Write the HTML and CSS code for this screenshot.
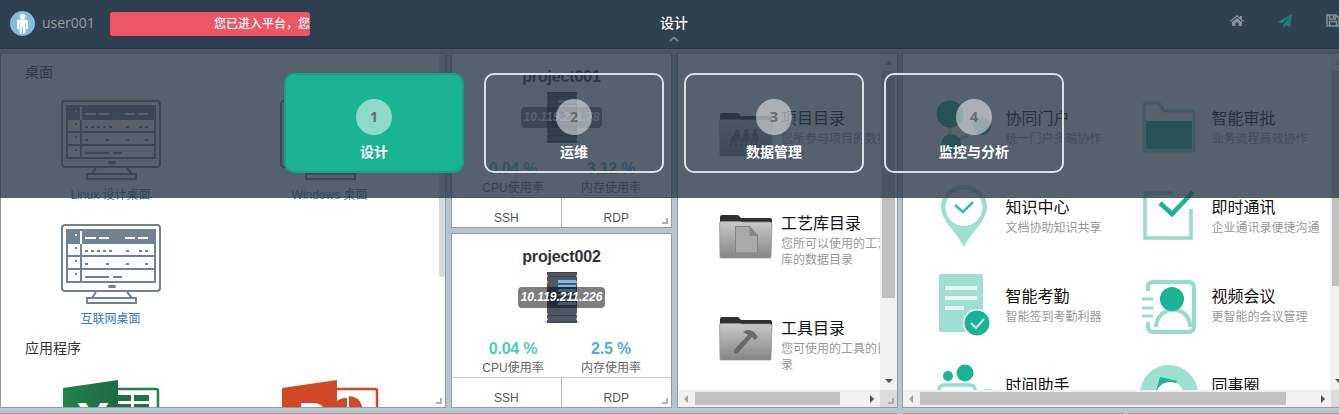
FILE: index.html
```html
<!DOCTYPE html>
<html lang="zh-CN">
<head>
<meta charset="utf-8">
<title>设计</title>
<link rel="stylesheet" href="styles.css">
</head>
<body>
<svg class="defs" width="0" height="0">
  <defs>
    <linearGradient id="metal" x1="0" y1="0" x2="0" y2="1"><stop offset="0" stop-color="#c9c9c9"/><stop offset="1" stop-color="#858585"/></linearGradient>
    <linearGradient id="xl" x1="0" x2="1"><stop offset="0" stop-color="#21814b"/><stop offset="1" stop-color="#1e6b41"/></linearGradient>
    <symbol id="monitor" viewBox="0 0 100 80">
      <rect x="1" y="1" width="98" height="66" rx="3" fill="none" stroke="#708294" stroke-width="2"/>
      <path fill="#708294" fill-rule="evenodd" d="M5 5H95V59H5ZM7 20H19V31H7ZM21 20H93V31H21ZM7 33H19V44H7ZM21 33H93V44H21ZM7 46H19V57H7ZM21 46H93V57H21Z"/>
      <path fill="#fff" d="M19 7h2v13h-2zM14 10h2v2h-2zM24 13h11v2H24zM38 13h10v2H38zM64 13h10v2H64zM77 13h10v2H77z"/>
      <path fill="#708294" d="M14 23h2v2h-2zM14 36h2v2h-2zM14 49h2v2h-2zM24 26h3v2h-3zM30 26h3v2h-3zM36 26h3v2h-3zM42 26h3v2h-3zM48 26h3v2h-3zM65 26h3v2h-3zM78 26h3v2h-3zM84 26h3v2h-3zM24 39h3v2h-3zM45 39h3v2h-3zM65 39h3v2h-3zM84 39h3v2h-3zM24 52h24v2H24zM52 52h9v2h-9z"/>
      <rect x="47" y="61" width="8" height="3" rx="1.5" fill="#708294"/>
      <path d="M35 68l-4 6M66 68l5 6M26 74h49v5H26z" fill="none" stroke="#708294" stroke-width="2"/>
    </symbol>
    <symbol id="server" viewBox="0 0 38 51">
      <path fill="#dcdcdc" d="M1 49h36v2H1z"/>
      <path fill="#4e5664" d="M4 0h30v3l-1 1 1 1v4l-1 1 1 1v30l-1 1 1 1v3l-1 1 1 1v3H4v-3l1-1-1-1v-3l1-1-1-1V11l1-1-1-1V5l1-1-1-1z"/>
      <path fill="#3a414d" d="M4 0h30v1H4zM5 4h28v1H5zM5 43h28v1H5zM4 49h30v1H4z"/>
      <path fill="#78bdea" d="M15 8h18v3H15zM15 13h18v2H15zM15 17h18v3H15zM15 22h18v2H15zM15 26h18v2H15zM15 30h18v3H15z"/>
    </symbol>
    <symbol id="folder" viewBox="0 0 54 45">
      <path fill="#2c302f" d="M1 8V3q0-2 2-2h15q2 0 3 2l1 1h29q2 0 2 2v8H1z"/>
      <path fill="url(#metal)" stroke="#949494" stroke-width=".7" d="M.5 9Q.5 7.500 2 7.500h18q2 0 3 .5h28q2 0 2 2l-1 33q0 1-1 1H2q-1 0-1-1z"/>
    </symbol>
  </defs>
</svg>

<header class="topbar">
  <div class="user">
    <svg width="26" height="26" viewBox="0 0 26 26"><circle cx="12.500" cy="12.500" r="12.500" fill="#84bce0"/><circle cx="12.500" cy="5.500" r="2.700" fill="#fff"/><path fill="#fff" d="M9 8.500h7q2 0 2 2V18h-2v-6h-.6v10.500H13V16h-1v6.500H9.600V12H9v6H7v-7.500q0-2 2-2z"/></svg>
    <span>user001</span>
  </div>
  <div class="notice"><span>您已进入平台，您</span></div>
  <div class="current"><b>设计</b><svg width="10" height="6" viewBox="0 0 10 6"><path d="M1 5l4-3.600L9 5" fill="none" stroke="#78838e" stroke-width="1.800"/></svg></div>
  <nav class="tools">
    <svg width="14" height="12" viewBox="0 0 14 12"><path fill="#87919b" d="M7 0l3 2.600V1h2v3.400l2 1.700-.8.900L7 1.800.8 7 0 6.100zM7 3l5 4.100V11H8.500V7.500h-3V11H2V7.100z"/></svg>
    <svg width="14" height="14" viewBox="0 0 14 14"><path fill="#1b7f7b" d="M14 0l-2 13-4.200-1.700L5.500 14v-3.700L12 2.500 4 9.600 0 8z"/></svg>
    <svg class="save" width="14" height="13" viewBox="0 0 14 13"><path d="M1 1h9l3 3v8H1zM3.500 1v4h6V1M3.500 12V7.500h7V12M7.500 2v2" fill="none" stroke="#87919b" stroke-width="1.500"/></svg>
  </nav>
</header>

<main class="board">
  <section class="panel desktops">
    <div class="scroller">
      <h3>桌面</h3>
      <div class="apps">
        <a class="app"><svg width="100" height="80"><use href="#monitor"/></svg><span>Linux 设计桌面</span></a>
        <a class="app"><svg width="100" height="80"><use href="#monitor"/></svg><span>Windows 桌面</span></a>
        <a class="app"><svg width="100" height="80"><use href="#monitor"/></svg><span>互联网桌面</span></a>
      </div>
      <h3>应用程序</h3>
      <div class="apps office">
        <a class="app"><svg width="97" height="80" viewBox="0 0 97 80"><rect x="50" y="9" width="45" height="70" rx="2" fill="#fff" stroke="#21814b" stroke-width="2.500"/><path fill="#207245" d="M55 15h13v6H55zM71 15h15v6H71zM55 24h13v6H55zM71 24h15v6H71z"/><path fill="url(#xl)" d="M0 8L55 0v80L0 72z"/><text x="14" y="58" class="glyph">X</text></svg></a>
        <a class="app"><svg width="97" height="80" viewBox="0 0 97 80"><rect x="50" y="9" width="45" height="70" rx="2" fill="#fff" stroke="#d24726" stroke-width="2.500"/><circle cx="64" cy="34" r="16" fill="#d24726"/><path fill="#d24726" stroke="#fff" stroke-width="2" d="M66 32V15q15 0 16 17z"/><path fill="#d24726" d="M0 8L55 0v80L0 72z"/><text x="15" y="58" class="glyph">P</text></svg></a>
      </div>
    </div>
    <i class="thin-thumb"></i><i class="grip"></i>
  </section>

  <div class="projects">
    <section class="panel project first">
      <h2>project001</h2>
      <div class="host"><svg width="38" height="51"><use href="#server"/></svg><em>10.119.221.78</em></div>
      <div class="stats"><div><b class="cpu">0.04 %</b><span>CPU使用率</span></div><div><b class="mem">3.12 %</b><span>内存使用率</span></div></div>
      <div class="actions"><span>SSH</span><span>RDP</span></div><i class="grip"></i>
    </section>
    <section class="panel project">
      <h2>project002</h2>
      <div class="host"><svg width="38" height="51"><use href="#server"/></svg><em>10.119.211.226</em></div>
      <div class="stats"><div><b class="cpu">0.04 %</b><span>CPU使用率</span></div><div><b class="mem">2.5 %</b><span>内存使用率</span></div></div>
      <div class="actions"><span>SSH</span><span>RDP</span></div><i class="grip"></i>
    </section>
  </div>

  <section class="panel framed">
    <div class="view folders">
      <div class="folder-icons">
        <svg width="54" height="45" viewBox="0 0 54 45"><use href="#folder"/><g fill="#6e6e6e"><circle cx="18" cy="19" r="2"/><circle cx="27" cy="19" r="2"/><circle cx="36" cy="19" r="2"/><path d="M16 21h4l3 7 2-7h4l3 7 2-7h4l3 9-3-3 1 7h-2l-2-5-2 5h-2l1-7-2 2-1-2-1 7h-2l-1-5-2 5h-2l1-7-2 2-1-2-1 7h-2l-1-5-2 5h-2l1-7-2 2z"/></g></svg>
        <svg width="54" height="45" viewBox="0 0 54 45"><use href="#folder"/><path d="M16.500 12.500H31l7.500 9V39h-22zM31 12.500v9h7.500" fill="#a9a9a9" stroke="#838383"/><path d="M31 12.500l7.500 9H31z" fill="#858585"/></svg>
        <svg width="54" height="45" viewBox="0 0 54 45"><use href="#folder"/><path fill="#6a6a6a" d="M15 34L29 19l-5-3q5-4 11 0l4 5-3 3-3-3-14 16q-5 2-4-3z"/></svg>
      </div>
      <div class="folder-text">
        <div><h4>项目目录</h4><p>您所参与项目的数据<br>目录</p></div>
        <div><h4>工艺库目录</h4><p>您所可以使用的工艺<br>库的数据目录</p></div>
        <div><h4>工具目录</h4><p>您可使用的工具的目<br>录</p></div>
      </div>
    </div>
    <div class="vbar"><i class="up"></i><i class="thumb tall"></i><i class="down"></i></div>
    <div class="hbar"><i class="left"></i><i class="thumb short"></i><i class="right"></i></div>
    <div class="corner"></div><i class="grip"></i>
  </section>

  <section class="panel framed wide">
    <div class="view services">
      <div class="service"><svg width="58" height="64" viewBox="0 -4 58 64"><path d="M14 14v31L47 26" fill="none" stroke="#9edfd0" stroke-width="3"/><circle cx="14" cy="14" r="13.500" fill="#1ab394"/><circle cx="15" cy="44" r="10" fill="#1ab394"/><circle cx="46" cy="26" r="9" fill="#1ab394"/></svg><div><h4>协同门户</h4><p>统一门户多端协作</p></div></div>
      <div class="service"><svg width="58" height="64" viewBox="0 -4 58 64"><path d="M2 51V5q0-2 2-2h13l5 8h28q2 0 2 2v38z" fill="none" stroke="#8fdac9" stroke-width="3"/><path fill="#1ab394" d="M4 21h46v28H4z"/></svg><div><h4>智能审批</h4><p>业务流程高效协作</p></div></div>
      <div class="service"><svg width="58" height="64" viewBox="-1 0 58 64"><path fill="#9edfd0" fill-rule="evenodd" d="M27 0C14 0 4 10 4 22c0 13 14 23 23 40 9-17 23-27 23-40C50 10 40 0 27 0zM27 4a18 18 0 1 1 0 37a18 18 0 1 1 0-37z"/><path d="M18 20l8 7 10-10" fill="none" stroke="#38bea2" stroke-width="2.500"/></svg><div><h4>知识中心</h4><p>文档协助知识共享</p></div></div>
      <div class="service"><svg width="58" height="64" viewBox="0 0 58 64"><path d="M31 8H3v45h46V24" fill="none" stroke="#94dccb" stroke-width="3.500"/><path d="M18 18l12 11L51 7" fill="none" stroke="#1ab394" stroke-width="4.500"/></svg><div><h4>即时通讯</h4><p>企业通讯录便捷沟通</p></div></div>
      <div class="service"><svg width="58" height="64" viewBox="-1 0 58 64"><rect x="2" width="44" height="58" rx="2" fill="#9edfd0"/><path d="M8 14h32M8 24h32M8 34h19" stroke="#e7f7f3" stroke-width="4"/><circle cx="40" cy="49" r="14" fill="#fff"/><circle cx="40" cy="49" r="12.500" fill="#1ab394"/><path d="M34 49l5 5 8-9" fill="none" stroke="#c8eee5" stroke-width="2"/></svg><div><h4>智能考勤</h4><p>智能签到考勤利器</p></div></div>
      <div class="service"><svg width="58" height="64" viewBox="0 0 58 64"><path d="M6 17V13q0-5 5-5h35q6 0 6 6v38q0 6-6 6H11q-5 0-5-5v-5" fill="none" stroke="#94dccb" stroke-width="4"/><path d="M0 25h11M0 34h11M0 42h11" stroke="#94dccb" stroke-width="3"/><path d="M14 53c1-23 34-23 34 0" fill="none" stroke="#94dccb" stroke-width="4"/><circle cx="30" cy="25" r="12" fill="#1ab394"/></svg><div><h4>视频会议</h4><p>更智能的会议管理</p></div></div>
      <div class="service"><svg width="58" height="64" viewBox="-1 0 58 64"><circle cx="11" cy="13" r="5" fill="#1ab394"/><circle cx="28" cy="10" r="8.500" fill="#1ab394"/><path d="M2 50V27q0-5 5-5h26q5 0 5 5v23M47 28h8" fill="none" stroke="#94dccb" stroke-width="3.500"/></svg><div><h4>时间助手</h4></div></div>
      <div class="service"><svg width="58" height="64" viewBox="0 0 58 64"><circle cx="27" cy="31" r="29" fill="#9edfd0"/><path fill="#1ab394" d="M13 32l5-18 17 4-8 13z"/><circle cx="28" cy="33" r="14" fill="#fff"/></svg><div><h4>同事圈</h4></div></div>
    </div>
    <div class="vbar"><i class="up"></i><i class="thumb mid"></i><i class="down"></i></div>
    <div class="hbar"><i class="left"></i><i class="thumb long"></i><i class="right"></i></div>
    <div class="corner"></div>
  </section>
</main>
<div class="next-row"><i></i><i></i><i></i></div>

<div class="switcher">
  <div class="step active"><i>1</i><b>设计</b></div>
  <div class="step"><i>2</i><b>运维</b></div>
  <div class="step"><i>3</i><b>数据管理</b></div>
  <div class="step"><i>4</i><b>监控与分析</b></div>
</div>
</body>
</html>
```
FILE: styles.css
```css
* { box-sizing: border-box; }
body {
  margin: 0;
  width: 1339px;
  height: 414px;
  overflow: hidden;
  position: relative;
  background: #b8c5d1;
  color: #333;
  font: 12px/16px "Liberation Sans", "Noto Sans CJK SC", sans-serif;
}
h2, h3, h4, p { margin: 0; font-weight: normal; }
i { font-style: normal; }
svg { display: block; flex: none; }
.defs { position: absolute; }

.topbar {
  position: relative;
  z-index: 3;
  display: grid;
  grid-template-columns: 110px 200px 728px 1fr;
  height: 49px;
  background: #2f4050;
  border-bottom: 1px solid #283745;
}
.user {
  display: flex;
  gap: 6px;
  padding: 11px 0 0 10px;
  color: #969ca3;
  font: 14px/24px "Open Sans", sans-serif;
}
.notice {
  height: 24px;
  margin-top: 12px;
  padding-left: 104px;
  overflow: hidden;
  white-space: nowrap;
  border-radius: 3px;
  background: #ed5565;
  color: #fff;
  font-weight: 500;
  line-height: 25px;
}
.current {
  display: flex;
  flex-direction: column;
  align-items: center;
  padding-top: 13px;
  color: #fff;
  font-size: 14px;
  line-height: 20px;
}
.current svg { margin-top: 3px; }
.current b { font-weight: 500; }
.tools {
  display: flex;
  gap: 34px;
  padding: 14px 0 0 192px;
}
.tools svg:first-child { margin-top: 1px; }

.board {
  display: grid;
  grid-template-columns: 446px 221px 221px 446px;
  column-gap: 5px;
  height: 355px;
  margin-top: 4px;
}
.panel {
  position: relative;
  background: #fff;
  border: 1px solid #969ba1;
  overflow: hidden;
}
.grip {
  position: absolute;
  right: 3px;
  bottom: 3px;
  width: 6px;
  height: 6px;
  border: solid #b0b0b0;
  border-width: 0 2px 2px 0;
}
.scroller { width: 438px; }
h3 { padding: 8px 0 0 24px; font-size: 14px; line-height: 20px; }
.apps { display: grid; grid-template-columns: 219px 219px; padding-top: 18px; row-gap: 20px; }
.app { display: flex; flex-direction: column; align-items: center; color: #337ab7; }
.app span { height: 18px; margin-top: 6px; line-height: 18px; }
.scroller h3:nth-of-type(2) { padding-top: 10px; }
.office { padding: 22px 0 0 1px; }
.glyph { fill: #fff; font: bold 48px "Open Sans", sans-serif; }
.thin-thumb {
  position: absolute;
  top: 0;
  right: 0;
  width: 6px;
  height: 223px;
  border-radius: 0 0 3px 3px;
  background: #d9d9d9;
}

.projects { display: grid; grid-template-rows: 175px 175px; row-gap: 5px; }
.project { display: flex; flex-direction: column; text-align: center; }
h2 { padding-top: 13px; font-size: 16px; font-weight: bold; line-height: 20px; letter-spacing: -.15px; }
.host { display: grid; place-items: center; margin-top: 5px; height: 51px; }
.host > * { grid-area: 1 / 1; }
.host em {
  padding: 0 3px;
  border-radius: 4px;
  background: rgba(0, 0, 0, .5);
  color: #fff;
  font-weight: bold;
  line-height: 21px;
}
.stats, .actions { display: grid; grid-template-columns: 1fr 1fr; }
.stats { padding: 0 11px 0 12px; margin-top: 16px; }
.stats b { display: block; font-size: 16px; line-height: 20px; letter-spacing: -.2px; }
.stats span { display: block; line-height: 18px; color: #666; }
.cpu { color: #48cfad; }
.mem { color: #4fabe5; }
.actions { height: 31px; margin-top: auto; border-top: 1px solid #ccc; color: #555; line-height: 40px; }
.actions span:first-child { border-right: 1px solid #bbb; }

.framed { display: grid; grid-template: 1fr 17px / 1fr 17px; }
.wide { margin-left: -1px; }
.view { display: flex; overflow: hidden; }
.folders { padding: 58px 0 0 41px; gap: 8px; }
.folder-icons { display: flex; flex-direction: column; gap: 57px; }
.folder-text { display: flex; flex-direction: column; gap: 52px; white-space: nowrap; }
.folder-text > div { height: 53px; margin-top: -4px; margin-bottom: 4px; }
h4 { color: #111; font-size: 16px; line-height: 22px; }
p { color: #999; line-height: 16px; }
.folder-text p { margin-top: 1px; }
.services {
  display: grid;
  grid-template-columns: 206px 206px;
  grid-auto-rows: 89px;
  padding: 43px 0 0 33px;
  white-space: nowrap;
}
.service { display: flex; gap: 11.5px; }
.service svg { margin-top: -1px; overflow: visible; }
.service > div { padding-top: 11px; }
.service p { margin-top: 1px; }
.vbar { grid-area: 1 / 2; background: #f1f1f1; position: relative; padding: 17px 2px 0; }
.hbar { grid-area: 2 / 1; background: #f1f1f1; position: relative; padding: 2px 17px; }
.corner { background: #dcdcdc; }
.thumb { display: block; background: #c1c1c1; }
.tall { height: 227px; }
.mid { height: 215px; }
.short { width: 145px; height: 13px; }
.long { width: 366px; height: 13px; }
.up, .down, .left, .right { position: absolute; border: 4px solid transparent; }
.up { top: 3px; left: 5px; border-bottom-color: #a3a3a3; }
.down { bottom: 3px; left: 5px; border-top-color: #505050; }
.left { left: 2px; top: 5px; border-right-color: #a3a3a3; }
.right { right: 2px; top: 5px; border-left-color: #505050; }
.wide .vbar { left: -1px; width: 18px; }

.next-row { display: grid; grid-template-columns: 898px 220px 220px; gap: 5px; margin-top: 5px; height: 1px; }
.next-row i { background: #969ba1; }

.switcher {
  position: absolute;
  z-index: 2;
  top: 0;
  left: 0;
  width: 1339px;
  height: 198px;
  display: flex;
  gap: 20px;
  padding: 73px 0 0 284px;
  background: rgba(43, 57, 72, .8);
}
.step {
  display: flex;
  flex-direction: column;
  align-items: center;
  width: 180px;
  height: 100px;
  padding-top: 24px;
  border: 2px solid #dae1e5;
  border-radius: 10px;
  color: #fff;
  font-size: 14px;
}
.step.active { background: #1ab394; border-color: #18a085; }
.step i {
  width: 36px;
  height: 36px;
  border-radius: 50%;
  background: rgba(255, 255, 255, .5);
  color: #676a6c;
  font: bold 14px/36px "Noto Sans", sans-serif;
  text-align: center;
}
.step b { margin-top: 7px; line-height: 20px; }
```
